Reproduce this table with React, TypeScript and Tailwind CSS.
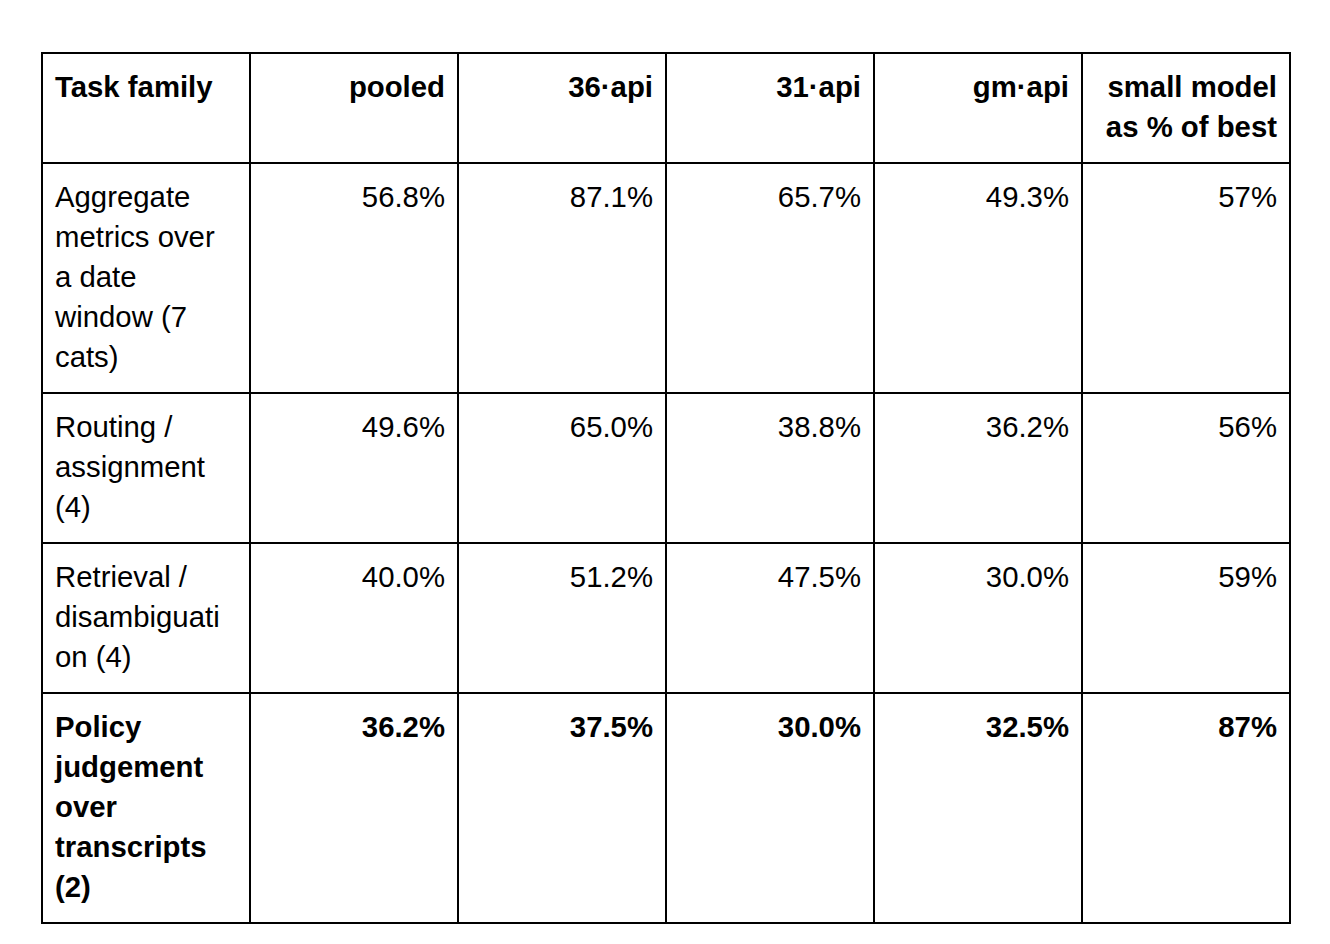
import React from "react";

type Row = {
  family: string;
  values: string[];
  bold?: boolean;
};

const headers = ["pooled", "36·api", "31·api", "gm·api", "small model as % of best"];

const rows: Row[] = [
  { family: "Aggregate metrics over a date window (7 cats)", values: ["56.8%", "87.1%", "65.7%", "49.3%", "57%"] },
  { family: "Routing / assignment (4)", values: ["49.6%", "65.0%", "38.8%", "36.2%", "56%"] },
  { family: "Retrieval / disambiguation (4)", values: ["40.0%", "51.2%", "47.5%", "30.0%", "59%"] },
  { family: "Policy judgement over transcripts (2)", values: ["36.2%", "37.5%", "30.0%", "32.5%", "87%"], bold: true },
];

const cell = "w-[208px] border-r-2 border-b-2 border-black align-top pt-[13px] pb-[15px]";

export default function App() {
  return (
    <main className="min-h-screen bg-white pl-[41px] pt-[52px] text-black font-['Liberation_Sans',Arial,sans-serif] text-[29.33px] leading-[40px]">
      <table className="w-[1250px] table-fixed border-separate border-spacing-0 border-l-2 border-t-2 border-black">
        <thead>
          <tr>
            <th className={`${cell} pl-3 pr-4 text-left font-bold`}>Task family</th>
            {headers.map((h) => (
              <th key={h} className={`${cell} pl-3 pr-3 text-right font-bold`}>
                {h}
              </th>
            ))}
          </tr>
        </thead>
        <tbody>
          {rows.map((r) => (
            <tr key={r.family} className={r.bold ? "font-bold" : "font-normal"}>
              <td className={`${cell} pl-3 pr-4 text-left break-words`}>{r.family}</td>
              {r.values.map((v, i) => (
                <td key={i} className={`${cell} pl-3 pr-3 text-right`}>
                  {v}
                </td>
              ))}
            </tr>
          ))}
        </tbody>
      </table>
    </main>
  );
}
